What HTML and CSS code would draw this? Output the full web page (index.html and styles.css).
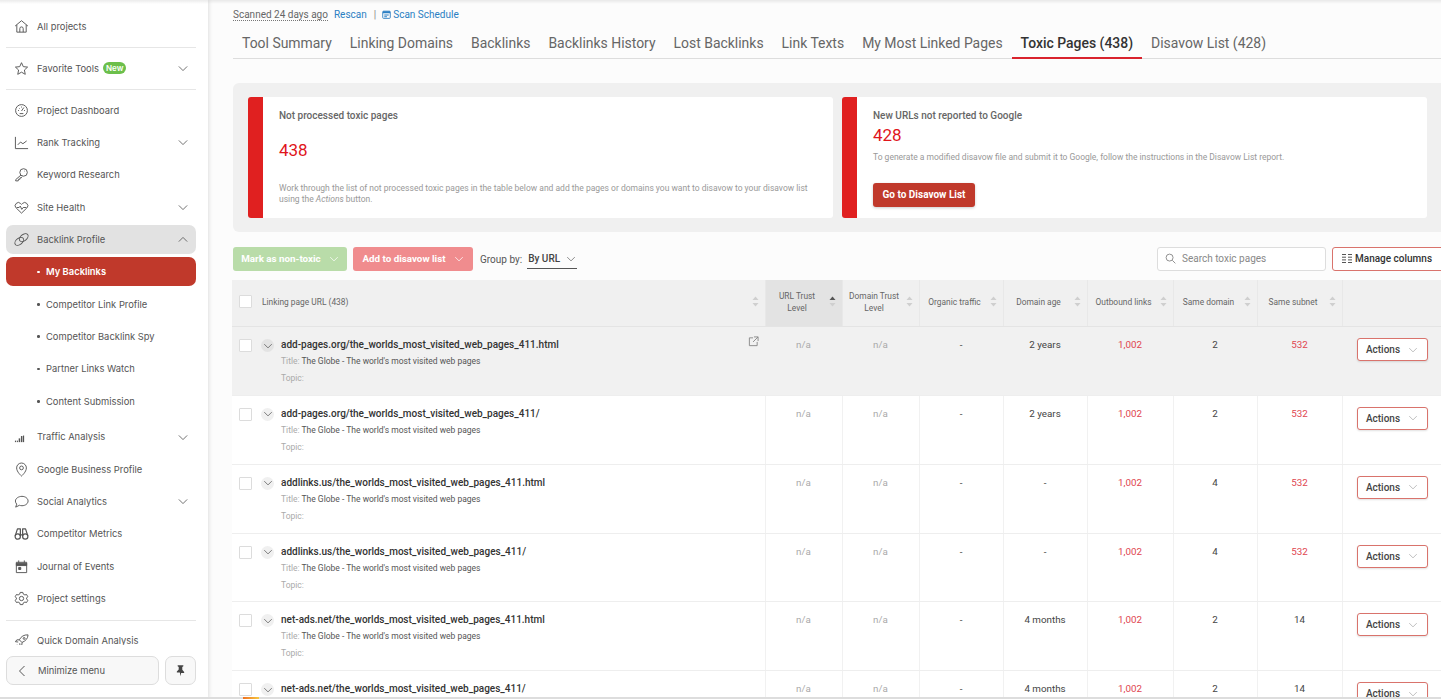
FILE: index.html
```html
<!DOCTYPE html>
<html lang="en">
<head>
  <meta charset="UTF-8">
  <title>Toxic Pages - Backlink Profile</title>
  <link rel="stylesheet" href="styles.css">
</head>
<body>

  <!-- shared icons -->
  <svg class="icon-defs" width="0" height="0">
    <symbol id="chev" viewBox="0 0 12 8"><path d="M1 1.500 6 6.500 11 1.500" fill="none" stroke="currentColor" stroke-width="1"/></symbol>
    <symbol id="sort" viewBox="0 0 7 11"><path d="M3.500 0.500 6.500 4H0.500z" fill="currentColor"/><path d="M3.500 10.500 0.500 7H6.500z" fill="#cfcfcf"/></symbol>
  </svg>

  <aside class="sidebar">
    <nav class="side-nav">
      <a class="side-item">
        <svg class="side-icon" viewBox="0 0 16 16"><path d="M1.200 7.500 8 1.800l6.800 5.700M3 6.300V14h10V6.300M6.200 14v-3.800a1.800 1.800 0 0 1 3.600 0V14"/></svg>
        All projects
      </a>
      <div class="side-divider"></div>
      <a class="side-item">
        <svg class="side-icon" viewBox="0 0 16 16"><path d="M8 1.800 9.900 6l4.600.5-3.400 3.100.9 4.600L8 11.900l-4 2.300.9-4.600L1.500 6.500 6.100 6z"/></svg>
        Favorite Tools <span class="new-badge">New</span>
        <svg class="side-chev"><use href="#chev"/></svg>
      </a>
      <div class="side-divider"></div>
      <a class="side-item">
        <svg class="side-icon" viewBox="0 0 16 16"><circle cx="8" cy="8" r="6.300"/><path d="M8 8.500 10.500 4.800M4.300 8h1M8 3.800v1M11.700 8h-1M5.500 5.500l.6.6M6 11.300h4"/></svg>
        Project Dashboard
      </a>
      <a class="side-item">
        <svg class="side-icon" viewBox="0 0 16 16"><path d="M1.500 2v12.500h13.500M4 10.500l3-3 2.500 1.800 4-3"/></svg>
        Rank Tracking
        <svg class="side-chev"><use href="#chev"/></svg>
      </a>
      <a class="side-item">
        <svg class="side-icon" viewBox="0 0 16 16"><circle cx="10.200" cy="5.800" r="4"/><path d="M7.400 8.600 1.800 13.500v1.300h2.700l.3-1.700h1.500l.2-1.600h1.300l.8-1.200M10.800 4.400h.5"/></svg>
        Keyword Research
      </a>
      <a class="side-item">
        <svg class="side-icon" viewBox="0 0 16 16"><path d="M8 14 2.300 8.500a3.300 3.300 0 0 1 0-4.800 3.300 3.300 0 0 1 4.700 0l1 1 1-1a3.300 3.300 0 0 1 4.700 0 3.300 3.300 0 0 1 0 4.800z"/><path d="M3 8h2.500l1.200-1.500L8.300 10 9.800 8H13"/></svg>
        Site Health
        <svg class="side-chev"><use href="#chev"/></svg>
      </a>
      <a class="side-item side-open">
        <svg class="side-icon" viewBox="0 0 16 16"><ellipse cx="5.600" cy="10" rx="5.300" ry="3.300" transform="rotate(-38 5.600 10)"/><ellipse cx="10.400" cy="6" rx="5.300" ry="3.300" transform="rotate(-38 10.400 6)"/></svg>
        Backlink Profile
        <svg class="side-chev chev-up"><use href="#chev"/></svg>
      </a>
      <a class="side-item side-sub side-active">My Backlinks</a>
      <a class="side-item side-sub">Competitor Link Profile</a>
      <a class="side-item side-sub">Competitor Backlink Spy</a>
      <a class="side-item side-sub">Partner Links Watch</a>
      <a class="side-item side-sub side-sub-last">Content Submission</a>
      <a class="side-item">
        <svg class="side-icon icon-solid" viewBox="0 0 16 16"><rect x="1" y="12.400" width="1.200" height="1.600"/><rect x="3" y="12.400" width="1.200" height="1.600"/><rect x="5" y="10" width="1.600" height="4"/><rect x="7.400" y="7.500" width="1.600" height="6.500"/><rect x="9.600" y="7" width="1.200" height="7"/></svg>
        Traffic Analysis
        <svg class="side-chev"><use href="#chev"/></svg>
      </a>
      <a class="side-item">
        <svg class="side-icon" viewBox="0 0 16 16"><path d="M8 15s5.200-4.400 5.200-8.700a5.200 5.200 0 0 0-10.400 0C2.800 10.600 8 15 8 15z"/><circle cx="8" cy="6.300" r="2"/></svg>
        Google Business Profile
      </a>
      <a class="side-item">
        <svg class="side-icon" viewBox="0 0 16 16"><path d="M8.500 2.500c3.600 0 6.500 2.200 6.500 5s-2.900 5-6.500 5c-1 0-1.900-.2-2.700-.5L1.800 14l1.100-3.200C2 9.900 1.500 8.700 1.500 7.500c0-2.800 3.400-5 7-5z"/></svg>
        Social Analytics
        <svg class="side-chev"><use href="#chev"/></svg>
      </a>
      <a class="side-item">
        <svg class="side-icon icon-bold" viewBox="0 0 16 16"><circle cx="4" cy="11.300" r="2.800"/><circle cx="12" cy="11.300" r="2.800"/><path d="M1.300 10.500 3.700 3h3.100v8M14.700 10.500 12.300 3H9.200v8M6.800 9.500h2.400"/></svg>
        Competitor Metrics
      </a>
      <a class="side-item">
        <svg class="side-icon" viewBox="0 0 16 16"><rect x="2.500" y="3.500" width="11" height="11"/><path d="M2.500 4.500h11v2.500h-11z" fill="#555"/><path d="M5 1.500v2.500M11 1.500v2.500"/><rect x="5" y="9" width="2.200" height="2.200" fill="#555"/></svg>
        Journal of Events
      </a>
      <a class="side-item">
        <svg class="side-icon" viewBox="0 0 16 16"><path d="M6.600 1.500h2.800l.5 1.800 1.700.9 1.800-.5 1.300 2.400-1.300 1.400v1l1.300 1.400-1.300 2.400-1.800-.5-1.700.9-.5 1.800H6.600l-.5-1.800-1.700-.9-1.800.5-1.300-2.400 1.300-1.400v-1L1.300 6.100l1.300-2.400 1.800.5 1.700-.9z"/><circle cx="8" cy="8" r="2.300"/></svg>
        Project settings
      </a>
      <div class="side-divider side-divider-low"></div>
      <a class="side-item">
        <svg class="side-icon" viewBox="0 0 16 16"><path d="M15 2c-4.200-.3-7.500 1.600-9.300 5.300l2.800 2.800C12.300 8.500 14.800 6 15 2z"/><circle cx="10.800" cy="5.800" r="1"/><path d="M5.700 7.300H3L1.500 9.300l3 .3M8.500 10.100v2.400l-2 1.500-.4-3M1 13.500l3-.5-.5 1.500-2.500 0z" /></svg>
        Quick Domain Analysis
      </a>
    </nav>
    <div class="side-footer">
      <button class="minimize-btn">
        <svg class="minimize-chev" viewBox="0 0 8 12"><path d="M6.500 1 1.500 6l5 5"/></svg>
        Minimize menu
      </button>
      <button class="pin-btn">
        <svg viewBox="0 0 16 16" width="13" height="13"><path d="M4.500 1.500h7v1.300l-1.300.8v3.600l2.300 2.500v1.300H8.800L8 15l-.8-4.500H3.500V9.200l2.300-2.500V3.600l-1.300-.8z" fill="#444"/></svg>
      </button>
    </div>
  </aside>

  <main class="main">
    <div class="scan-row">
      <span class="scan-date">Scanned 24 days ago</span>
      <a class="scan-link">Rescan</a>
      <span class="scan-sep">|</span>
      <a class="scan-link scan-schedule">
        <svg viewBox="0 0 10 10" width="9" height="9"><rect x="0.800" y="1.300" width="8.400" height="8" rx="1" fill="none" stroke="#2b7fc3"/><path d="M1 1.500h8v2H1zM2.500 5h5v1h-5zM2.500 7h3v1h-3z" fill="#2b7fc3"/></svg>
        Scan Schedule
      </a>
    </div>

    <div class="tabs">
      <a class="tab">Tool Summary</a>
      <a class="tab">Linking Domains</a>
      <a class="tab">Backlinks</a>
      <a class="tab">Backlinks History</a>
      <a class="tab">Lost Backlinks</a>
      <a class="tab">Link Texts</a>
      <a class="tab">My Most Linked Pages</a>
      <a class="tab tab-active">Toxic Pages (438)</a>
      <a class="tab">Disavow List (428)</a>
    </div>

    <section class="summary">
      <div class="summary-card">
        <div class="card-title">Not processed toxic pages</div>
        <div class="card-number number-wide">438</div>
        <p class="card-desc desc-wide">Work through the list of not processed toxic pages in the table below and add the pages or domains you want to disavow to your disavow list using the <i>Actions</i> button.</p>
      </div>
      <div class="summary-card">
        <div class="card-title">New URLs not reported to Google</div>
        <div class="card-number">428</div>
        <p class="card-desc">To generate a modified disavow file and submit it to Google, follow the instructions in the Disavow List report.</p>
        <button class="go-btn">Go to Disavow List</button>
      </div>
    </section>

    <div class="toolbar">
      <button class="bulk-btn bulk-green">Mark as non-toxic <svg class="btn-chev"><use href="#chev"/></svg></button>
      <button class="bulk-btn bulk-red">Add to disavow list <svg class="btn-chev"><use href="#chev"/></svg></button>
      <span class="group-label">Group by:</span>
      <span class="group-select">By URL <svg class="btn-chev"><use href="#chev"/></svg></span>
      <label class="search-box">
        <svg viewBox="0 0 12 12" width="11" height="11"><circle cx="5" cy="5" r="3.800" fill="none" stroke="#888"/><path d="M8 8l3.300 3.300" stroke="#888"/></svg>
        Search toxic pages
      </label>
      <button class="columns-btn">
        <svg viewBox="0 0 10 9" width="10" height="9"><path d="M0 .5h4M6 .5h4M0 3.200h4M6 3.200h4M0 5.900h4M6 5.900h4M0 8.500h4M6 8.500h4" stroke="#555"/></svg>
        Manage columns
      </button>
    </div>

    <table class="pages-table">
      <colgroup>
        <col class="col-url"><col class="col-77"><col class="col-77"><col class="col-84"><col class="col-84"><col class="col-86"><col class="col-84"><col class="col-85"><col class="col-99">
      </colgroup>
      <thead>
        <tr>
          <th>
            <div class="th-inner th-left"><span class="checkbox"></span><span class="th-label">Linking page URL (438)</span><svg class="sort"><use href="#sort"/></svg></div>
          </th>
          <th class="th-sorted"><div class="th-inner"><span class="th-label">URL Trust Level</span><svg class="sort sort-on"><use href="#sort"/></svg></div></th>
          <th><div class="th-inner"><span class="th-label">Domain Trust Level</span><svg class="sort"><use href="#sort"/></svg></div></th>
          <th><div class="th-inner"><span class="th-label">Organic traffic</span><svg class="sort"><use href="#sort"/></svg></div></th>
          <th><div class="th-inner"><span class="th-label">Domain age</span><svg class="sort"><use href="#sort"/></svg></div></th>
          <th><div class="th-inner"><span class="th-label">Outbound links</span><svg class="sort"><use href="#sort"/></svg></div></th>
          <th><div class="th-inner"><span class="th-label">Same domain</span><svg class="sort"><use href="#sort"/></svg></div></th>
          <th><div class="th-inner"><span class="th-label">Same subnet</span><svg class="sort"><use href="#sort"/></svg></div></th>
          <th></th>
        </tr>
      </thead>
      <tbody>
        <tr class="row-hover">
          <td>
            <div class="page-cell">
              <span class="checkbox"></span>
              <span class="row-toggle"><svg class="toggle-chev"><use href="#chev"/></svg></span>
              <div class="page-info">
                <div class="page-url">add-pages.org/the_worlds_most_visited_web_pages_411.html</div>
                <div class="page-meta"><span>Title:</span> The Globe - The world's most visited web pages</div>
                <div class="page-meta"><span>Topic:</span></div>
              </div>
              <svg class="ext-link" viewBox="0 0 12 12" width="11" height="11"><path d="M5.500 2H1.500v8.500H10V6.500M6.500 1h4.500v4.500M11 1 5.500 6.500" fill="none" stroke="#888"/></svg>
            </div>
          </td>
          <td class="na">n/a</td><td class="na">n/a</td><td class="val">-</td><td class="val">2 years</td><td class="val red">1,002</td><td class="val">2</td><td class="val red">532</td>
          <td class="action-cell"><button class="actions-btn">Actions <svg class="btn-chev"><use href="#chev"/></svg></button></td>
        </tr>
        <tr>
          <td>
            <div class="page-cell">
              <span class="checkbox"></span>
              <span class="row-toggle"><svg class="toggle-chev"><use href="#chev"/></svg></span>
              <div class="page-info">
                <div class="page-url">add-pages.org/the_worlds_most_visited_web_pages_411/</div>
                <div class="page-meta"><span>Title:</span> The Globe - The world's most visited web pages</div>
                <div class="page-meta"><span>Topic:</span></div>
              </div>
            </div>
          </td>
          <td class="na">n/a</td><td class="na">n/a</td><td class="val">-</td><td class="val">2 years</td><td class="val red">1,002</td><td class="val">2</td><td class="val red">532</td>
          <td class="action-cell"><button class="actions-btn">Actions <svg class="btn-chev"><use href="#chev"/></svg></button></td>
        </tr>
        <tr>
          <td>
            <div class="page-cell">
              <span class="checkbox"></span>
              <span class="row-toggle"><svg class="toggle-chev"><use href="#chev"/></svg></span>
              <div class="page-info">
                <div class="page-url">addlinks.us/the_worlds_most_visited_web_pages_411.html</div>
                <div class="page-meta"><span>Title:</span> The Globe - The world's most visited web pages</div>
                <div class="page-meta"><span>Topic:</span></div>
              </div>
            </div>
          </td>
          <td class="na">n/a</td><td class="na">n/a</td><td class="val">-</td><td class="val">-</td><td class="val red">1,002</td><td class="val">4</td><td class="val red">532</td>
          <td class="action-cell"><button class="actions-btn">Actions <svg class="btn-chev"><use href="#chev"/></svg></button></td>
        </tr>
        <tr>
          <td>
            <div class="page-cell">
              <span class="checkbox"></span>
              <span class="row-toggle"><svg class="toggle-chev"><use href="#chev"/></svg></span>
              <div class="page-info">
                <div class="page-url">addlinks.us/the_worlds_most_visited_web_pages_411/</div>
                <div class="page-meta"><span>Title:</span> The Globe - The world's most visited web pages</div>
                <div class="page-meta"><span>Topic:</span></div>
              </div>
            </div>
          </td>
          <td class="na">n/a</td><td class="na">n/a</td><td class="val">-</td><td class="val">-</td><td class="val red">1,002</td><td class="val">4</td><td class="val red">532</td>
          <td class="action-cell"><button class="actions-btn">Actions <svg class="btn-chev"><use href="#chev"/></svg></button></td>
        </tr>
        <tr>
          <td>
            <div class="page-cell">
              <span class="checkbox"></span>
              <span class="row-toggle"><svg class="toggle-chev"><use href="#chev"/></svg></span>
              <div class="page-info">
                <div class="page-url">net-ads.net/the_worlds_most_visited_web_pages_411.html</div>
                <div class="page-meta"><span>Title:</span> The Globe - The world's most visited web pages</div>
                <div class="page-meta"><span>Topic:</span></div>
              </div>
            </div>
          </td>
          <td class="na">n/a</td><td class="na">n/a</td><td class="val">-</td><td class="val">4 months</td><td class="val red">1,002</td><td class="val">2</td><td class="val">14</td>
          <td class="action-cell"><button class="actions-btn">Actions <svg class="btn-chev"><use href="#chev"/></svg></button></td>
        </tr>
        <tr>
          <td>
            <div class="page-cell">
              <span class="checkbox"></span>
              <span class="row-toggle"><svg class="toggle-chev"><use href="#chev"/></svg></span>
              <div class="page-info">
                <div class="page-url">net-ads.net/the_worlds_most_visited_web_pages_411/</div>
                <div class="page-meta"><span>Title:</span> The Globe - The world's most visited web pages</div>
                <div class="page-meta"><span>Topic:</span></div>
              </div>
            </div>
          </td>
          <td class="na">n/a</td><td class="na">n/a</td><td class="val">-</td><td class="val">4 months</td><td class="val red">1,002</td><td class="val">2</td><td class="val">14</td>
          <td class="action-cell"><button class="actions-btn">Actions <svg class="btn-chev"><use href="#chev"/></svg></button></td>
        </tr>
      </tbody>
    </table>
  </main>

  <!-- strip of the window below the page -->
  <div class="bottom-edge"><span class="bottom-mark"></span></div>

</body>
</html>
```

FILE: styles.css
```css
* {
  box-sizing: border-box;
}
html, body {
  height: 100%;
}
body {
  margin: 0;
  display: flex;
  height: 699px;
  overflow: hidden;
  position: relative;
  font-family: 'Roboto', 'Liberation Sans', sans-serif;
  background-color: #fcfcfc;
  color: #444444;
}
body::before {
  content: "";
  position: absolute;
  top: 0;
  left: 0;
  right: 0;
  height: 4px;
  z-index: 2;
  background: linear-gradient(rgba(0, 0, 0, 0.08), rgba(0, 0, 0, 0));
}
button {
  font-family: inherit;
  cursor: pointer;
}
.icon-defs {
  position: absolute;
}

/* sidebar */
.sidebar {
  width: 208px;
  flex-shrink: 0;
  display: flex;
  flex-direction: column;
  background-color: #ffffff;
  box-shadow: 1px 0 4px rgba(0, 0, 0, 0.12);
  font-family: 'Inter', 'Liberation Sans', sans-serif;
  font-size: 9.4px;
  color: #555555;
}
.side-nav {
  flex: 1;
  min-height: 0;
  overflow: hidden;
  padding: 11.5px 12px 0 6px;
}
.side-item {
  display: flex;
  align-items: center;
  position: relative;
  height: 29px;
  margin-bottom: 3.35px;
  padding-left: 31px;
  border-radius: 7px;
  white-space: nowrap;
}
.side-icon {
  position: absolute;
  left: 8px;
  top: 7px;
  width: 15px;
  height: 15px;
  fill: none;
  stroke: #555555;
  stroke-width: 1;
  stroke-linejoin: round;
}
.icon-solid {
  fill: #555555;
  stroke: none;
}
.icon-bold {
  stroke-width: 1.3;
}
.side-chev {
  position: absolute;
  right: 8px;
  top: 11.5px;
  width: 10px;
  height: 7px;
  color: #555555;
}
.chev-up {
  transform: rotate(180deg);
}
.side-divider {
  height: 1px;
  margin: 6.5px 0 5.5px;
  background-color: #e6e6e6;
}
.side-divider-low {
  margin: 7px 0 5px;
}
.new-badge {
  margin-left: 4px;
  padding: 0 3px;
  height: 12px;
  line-height: 12px;
  border-radius: 6px;
  background-color: #6cbf4b;
  color: #ffffff;
  font-size: 8px;
  font-weight: 600;
}
.side-open {
  background-color: #e2e2e2;
}
.side-sub {
  padding-left: 40px;
}
.side-sub::before {
  content: "";
  position: absolute;
  left: 31px;
  top: 13.5px;
  width: 2.500px;
  height: 2.500px;
  border-radius: 50%;
  background-color: currentColor;
}
.side-sub-last {
  margin-bottom: 6.7px;
}
.side-active {
  background-color: #c0392b;
  color: #ffffff;
  font-weight: 600;
}
.side-footer {
  display: flex;
  gap: 6px;
  height: 54px;
  padding: 11px 12px 14px 6px;
}
.minimize-btn,
.pin-btn {
  display: flex;
  align-items: center;
  justify-content: center;
  height: 29px;
  padding: 0;
  background-color: #f8f8f8;
  border: 1px solid #dddddd;
  border-radius: 7px;
  color: #555555;
  font-family: inherit;
  font-size: 9.4px;
}
.minimize-btn {
  width: 153px;
  justify-content: flex-start;
  padding-left: 11px;
}
.minimize-chev {
  width: 8px;
  height: 12px;
  margin-right: 12px;
  fill: none;
  stroke: #555555;
}
.pin-btn {
  width: 31px;
}

/* main column */
.main {
  flex: 1;
  min-width: 0;
  height: 699px;
  overflow: hidden;
  padding-left: 25px;
}
.scan-row {
  display: flex;
  align-items: center;
  height: 18px;
  margin-top: 5px;
  font-size: 10px;
}
.scan-date {
  border-bottom: 1px dotted #777777;
  color: #666666;
  line-height: 11px;
  padding-top: 1px;
}
.scan-link {
  margin-left: 6px;
  color: #2b7fc3;
}
.scan-sep {
  margin-left: 7px;
  color: #888888;
}
.scan-schedule {
  display: flex;
  align-items: center;
  gap: 2px;
}
.tabs {
  display: flex;
  height: 36px;
  border-bottom: 1px solid #dddddd;
}
.tab {
  padding: 0 9px;
  line-height: 40px;
  height: 36px;
  font-size: 13.95px;
  color: #666666;
  white-space: nowrap;
}
.tab-active {
  color: #333333;
  font-weight: 500;
  border-bottom: 2px solid #d9232d;
}

/* summary panel */
.summary {
  display: grid;
  grid-template-columns: 585px 585px;
  gap: 9px;
  height: 149px;
  margin-top: 24px;
  padding: 14px 15px;
  background-color: #f0f0f0;
  border-radius: 6px 0 0 6px;
}
.summary-card {
  display: flex;
  flex-direction: column;
  align-items: flex-start;
  height: 121px;
  padding: 11.5px 20px 0 16px;
  background-color: #ffffff;
  border-left: 15px solid #e02020;
  border-radius: 3px;
}
.card-title {
  font-size: 10px;
  line-height: 13px;
  font-weight: 500;
  color: #666666;
}
.card-number {
  margin-top: 3px;
  font-size: 17px;
  line-height: 20px;
  color: #e0151b;
}
.number-wide {
  margin-top: 18px;
}
.card-desc {
  margin: 7px 0 0;
  font-size: 8.5px;
  line-height: 11px;
  color: #999999;
}
.desc-wide {
  margin-top: 23px;
}
.go-btn {
  margin-top: 20.5px;
  width: 102px;
  height: 24px;
  padding: 0 0 1px;
  background-color: #c0392b;
  color: #ffffff;
  border: none;
  border-radius: 3px;
  font-size: 10px;
  font-weight: 700;
  box-shadow: 0 1px 3px rgba(0, 0, 0, 0.2);
}

/* toolbar */
.toolbar {
  display: flex;
  align-items: center;
  height: 24px;
  margin-top: 15px;
  font-size: 10px;
}
.bulk-btn {
  display: flex;
  align-items: center;
  justify-content: center;
  gap: 8px;
  height: 24px;
  padding: 0 0 1px;
  border: none;
  border-radius: 3px;
  color: #ffffff;
  font-size: 9.8px;
  font-weight: 700;
}
.bulk-green {
  width: 114px;
  background-color: #b9dca9;
}
.bulk-red {
  width: 120px;
  margin-left: 6px;
  background-color: #f08c8e;
}
.btn-chev {
  width: 10px;
  height: 6px;
  color: #aaaaaa;
}
.bulk-btn .btn-chev {
  color: #ffffff;
}
.group-label {
  margin-left: 7px;
  color: #555555;
}
.group-select {
  display: flex;
  align-items: center;
  gap: 6px;
  height: 19px;
  margin-left: 5px;
  padding: 0 1px;
  border-bottom: 1px solid #555555;
  color: #444444;
  font-weight: 500;
}
.group-select .btn-chev {
  color: #666666;
}
.search-box {
  display: flex;
  align-items: center;
  gap: 6px;
  width: 169px;
  height: 24px;
  margin-left: auto;
  padding: 0 0 1px 7px;
  background-color: #ffffff;
  border: 1px solid #dddddd;
  border-radius: 3px;
  color: #888888;
}
.columns-btn {
  display: flex;
  align-items: center;
  gap: 3px;
  flex-shrink: 0;
  width: 112px;
  height: 24px;
  margin-left: 6px;
  margin-right: -3px;
  padding: 0 0 1px 9px;
  background-color: #ffffff;
  border: 1px solid #d9736c;
  border-radius: 3px;
  color: #333333;
  font-size: 10px;
  font-weight: 500;
}

/* table */
.pages-table {
  width: 1209px;
  margin: 9px 0 0 -1px;
  border-collapse: collapse;
  table-layout: fixed;
  background-color: #ffffff;
}
.col-url { width: 533px; }
.col-77 { width: 77px; }
.col-84 { width: 84px; }
.col-85 { width: 85px; }
.col-86 { width: 86px; }
.col-99 { width: 99px; }
.pages-table thead tr {
  height: 46.5px;
  background-color: #f0f0f0;
}
.pages-table th {
  padding: 0;
  border-right: 1px solid #e8e8e8;
  border-bottom: 1px solid #e4e4e4;
  font-size: 8.4px;
  line-height: 12px;
  font-weight: 400;
  color: #666666;
}
.th-sorted {
  background-color: #e3e3e3;
}
.th-inner {
  display: flex;
  align-items: center;
  padding: 0 6px 3px;
  text-align: center;
}
.th-label {
  flex: 1;
  padding-right: 6px;
}
.th-left {
  padding-left: 7px;
}
.th-left .th-label {
  padding-left: 10px;
  text-align: left;
}
.sort {
  flex-shrink: 0;
  width: 7px;
  height: 11px;
  color: #cfcfcf;
}
.sort-on {
  color: #555555;
}
.pages-table tbody tr {
  height: 68.85px;
}
.pages-table td {
  padding: 12px 0 0;
  vertical-align: top;
  border-right: 1px solid #f1f1f1;
  border-bottom: 1px solid #eeeeee;
  text-align: center;
  font-size: 9.8px;
  line-height: 12px;
}
.row-hover {
  background-color: #f1f1f1;
}
.row-hover .row-toggle {
  background-color: #e3e3e3;
}
.page-cell {
  display: flex;
  padding: 0 6px 0 7px;
  text-align: left;
}
.checkbox {
  display: block;
  flex-shrink: 0;
  width: 13px;
  height: 13px;
  background-color: #ffffff;
  border: 1px solid #dcdcdc;
  border-radius: 1px;
}
.row-toggle {
  display: flex;
  align-items: center;
  justify-content: center;
  flex-shrink: 0;
  width: 13px;
  height: 13px;
  margin-left: 9px;
  border-radius: 50%;
  background-color: #f0f0f0;
}
.toggle-chev {
  width: 10px;
  height: 6px;
  color: #555555;
}
.page-info {
  flex: 1;
  margin-left: 7px;
}
.page-url {
  margin-bottom: -1px;
  font-size: 10px;
  font-weight: 500;
  color: #333333;
}
.page-meta {
  margin-top: 5px;
  font-size: 8.5px;
  color: #555555;
}
.page-meta span {
  color: #aaaaaa;
}
.ext-link {
  flex-shrink: 0;
  margin: -3px 0 0;
}
.na {
  font-size: 8.4px;
  color: #aaaaaa;
}
.val {
  color: #444444;
}
.red {
  color: #e0454f;
}
.action-cell {
  text-align: left;
}
.pages-table td.action-cell {
  padding: 11px 0 0 14px;
  border-right: none;
}
.actions-btn {
  display: flex;
  align-items: center;
  justify-content: center;
  gap: 8px;
  width: 71px;
  height: 23px;
  padding: 0;
  background-color: #ffffff;
  border: 1px solid #d9736c;
  border-radius: 3px;
  color: #444444;
  font-size: 10px;
  font-weight: 500;
  box-shadow: 0 1px 2px rgba(0, 0, 0, 0.12);
}

/* window edge */
.bottom-edge {
  position: absolute;
  left: 0;
  right: 0;
  bottom: 0;
  height: 2.500px;
  background-color: #dddddd;
}
.bottom-mark {
  position: absolute;
  left: 243px;
  top: 0;
  width: 16px;
  height: 100%;
  background: linear-gradient(90deg, #f07020, #f5c842);
}
```
